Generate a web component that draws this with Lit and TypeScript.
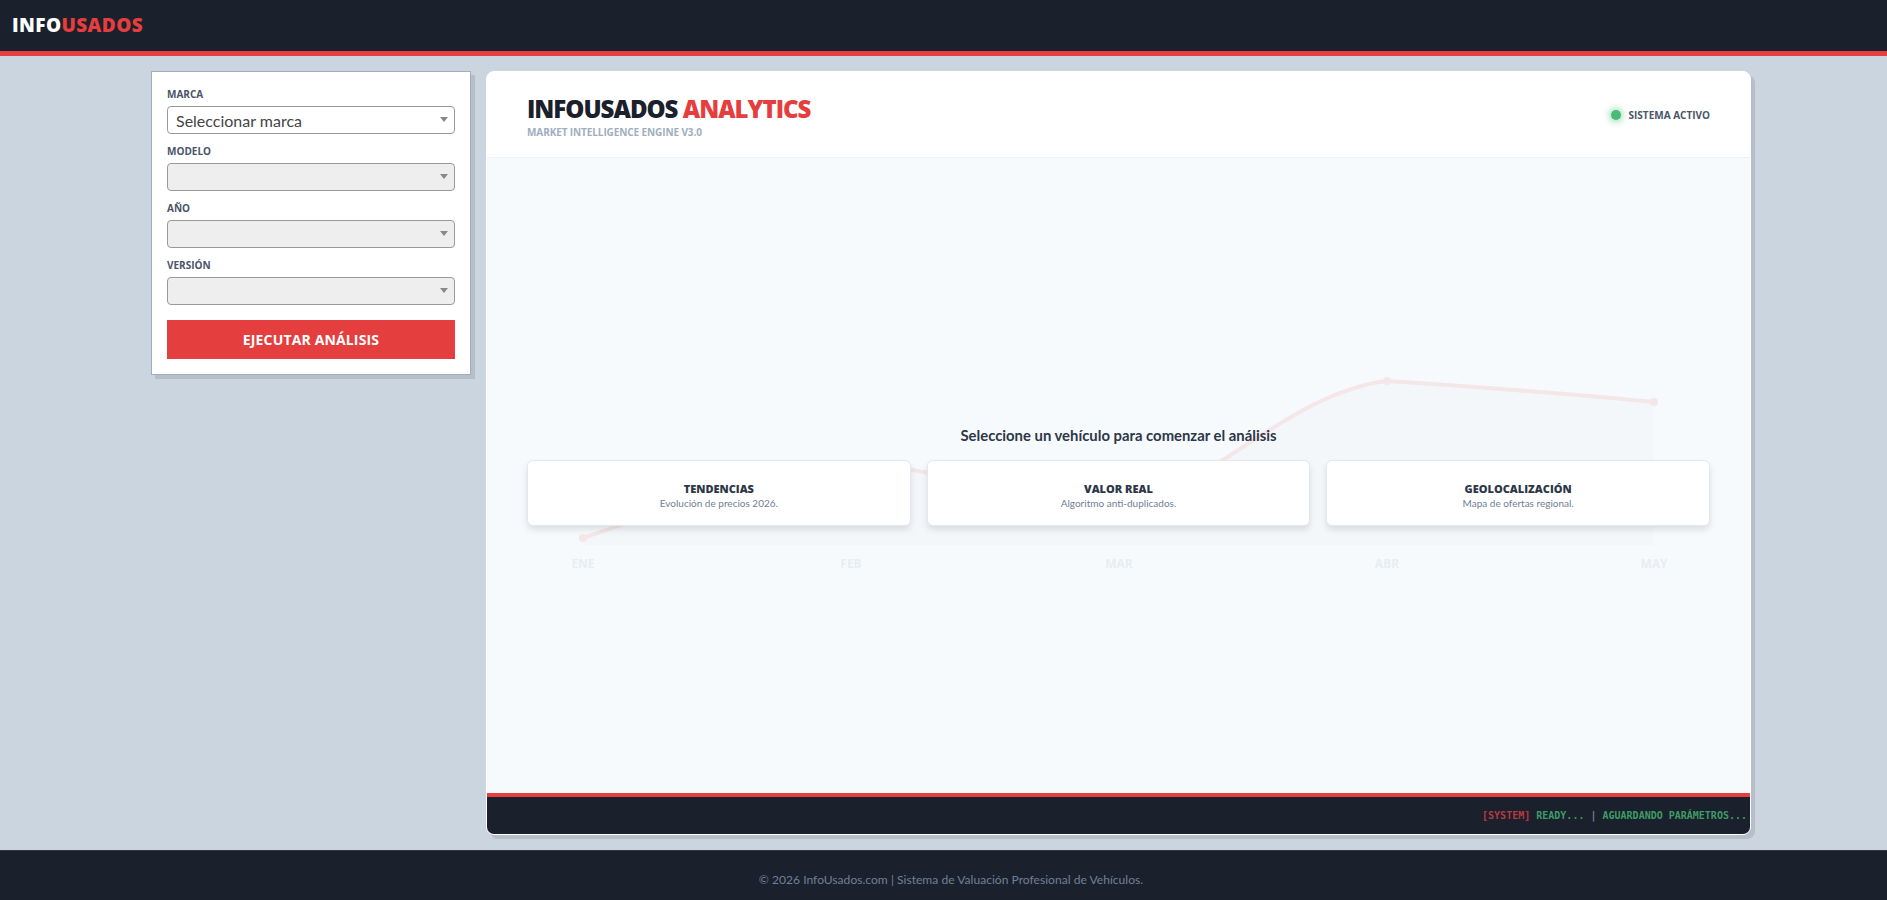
import { LitElement, html, css, svg } from "lit";
import { customElement } from "lit/decorators.js";

const FIELDS = [
  { label: "MARCA", placeholder: "Seleccionar marca", disabled: false },
  { label: "MODELO", placeholder: "", disabled: true },
  { label: "AÑO", placeholder: "", disabled: true },
  { label: "VERSIÓN", placeholder: "", disabled: true },
];

const CARDS = [
  { title: "TENDENCIAS", text: "Evolución de precios 2026." },
  { title: "VALOR REAL", text: "Algoritmo anti-duplicados." },
  { title: "GEOLOCALIZACIÓN", text: "Mapa de ofertas regional." },
];

const MONTHS = [
  { label: "ENE", x: 96, y: 380 },
  { label: "FEB", x: 364, y: 306 },
  { label: "MAR", x: 632, y: 350 },
  { label: "ABR", x: 900, y: 223 },
  { label: "MAY", x: 1167, y: 244 },
];

@customElement("app-root")
export class AppRoot extends LitElement {
  static styles = css`
    :host {
      display: block;
      font-family: "Open Sans", "Noto Sans", sans-serif;
      color: #1a202c;
    }
    * { box-sizing: border-box; }
    .page {
      min-height: 900px;
      display: flex;
      flex-direction: column;
      background: #cbd5e0;
    }
    .topbar {
      height: 56px;
      flex: none;
      background: #1a202c;
      border-bottom: 5px solid #e53e3e;
      display: flex;
      align-items: center;
      padding: 0 12px 2px;
      font-size: 19px;
      font-weight: 800;
      letter-spacing: 0.4px;
      color: #fff;
    }
    .topbar span, .title span { color: #e53e3e; }
    .body {
      flex: 1;
      display: flex;
      justify-content: center;
      align-items: stretch;
      gap: 15px;
      padding: 15px 0 15px 15px;
    }
    .side {
      width: 320px;
      flex: none;
      align-self: flex-start;
      background: #fff;
      border: 1px solid #a0aec0;
      box-shadow: 4px 4px 0 rgba(0, 0, 0, 0.1);
      padding: 15px;
      display: flex;
      flex-direction: column;
    }
    .field { display: flex; flex-direction: column; margin-bottom: 10px; }
    label {
      font-size: 10px;
      line-height: 14px;
      font-weight: 700;
      color: #4a5568;
      margin-bottom: 5px;
    }
    .pick { position: relative; display: block; }
    .pick::after {
      content: "";
      position: absolute;
      right: 7px;
      top: 11px;
      border-left: 4px solid transparent;
      border-right: 4px solid transparent;
      border-top: 5px solid #888;
    }
    select {
      display: block;
      width: 100%;
      height: 28px;
      appearance: none;
      font-family: "Lato", "Open Sans", sans-serif;
      font-size: 16px;
      color: #444;
      background-color: #fff;
      border: 1px solid #999;
      border-radius: 4px;
      padding: 0 8px;
      opacity: 1;
    }
    select:disabled { background-color: #eee; }
    button {
      margin-top: 5px;
      height: 39px;
      border: none;
      background: #e53e3e;
      color: #fff;
      font-family: inherit;
      font-size: 14px;
      font-weight: 700;
      letter-spacing: 0.15px;
    }
    .main {
      width: 1265px;
      flex: none;
      display: flex;
      flex-direction: column;
      background: #f7fafc;
      border: 1px solid #fff;
      border-radius: 8px;
      box-shadow: 4px 4px 0 rgba(0, 0, 0, 0.1);
      overflow: hidden;
    }
    .head {
      height: 86px;
      flex: none;
      background: #fff;
      border-bottom: 1px solid #edf2f7;
      padding: 0 40px;
      display: flex;
      justify-content: space-between;
      align-items: center;
    }
    .brand { padding-top: 4px; }
    .title {
      font-size: 24px;
      line-height: 28px;
      font-weight: 800;
      letter-spacing: -1px;
      color: #1a202c;
    }
    .sub {
      margin-top: 2px;
      font-size: 10px;
      line-height: 14px;
      font-weight: 700;
      letter-spacing: -0.1px;
      color: #a0aec0;
    }
    .status {
      display: flex;
      align-items: center;
      gap: 8px;
      font-size: 10px;
      font-weight: 700;
      color: #4a5568;
    }
    .dot {
      width: 10px;
      height: 10px;
      border-radius: 50%;
      background: #48bb78;
      box-shadow: 0 0 8px #48bb78;
    }
    .stage {
      flex: 1;
      position: relative;
      display: flex;
      flex-direction: column;
      justify-content: center;
      align-items: stretch;
      padding: 0 40px;
    }
    .chart {
      position: absolute;
      left: 0;
      top: 0;
      width: 1263px;
      height: 636px;
      opacity: 0.1;
    }
    .chart text {
      font-family: "Open Sans", sans-serif;
      font-size: 12px;
      font-weight: 700;
      fill: #718096;
      text-anchor: middle;
    }
    .prompt {
      position: relative;
      text-align: center;
      font-family: "Lato", "Open Sans", sans-serif;
      font-size: 14.85px;
      line-height: 20px;
      font-weight: 700;
      color: #2d3748;
      margin-bottom: 15px;
    }
    .cards {
      position: relative;
      display: grid;
      grid-template-columns: repeat(3, 1fr);
      gap: 16px;
    }
    .card {
      height: 66px;
      padding-top: 5px;
      background: #fff;
      border: 1px solid #e2e8f0;
      border-radius: 6px;
      box-shadow: 0 4px 6px rgba(0, 0, 0, 0.1);
      text-align: center;
      display: flex;
      flex-direction: column;
      justify-content: center;
    }
    .card b {
      font-size: 11px;
      line-height: 15px;
      font-weight: 800;
      color: #2d3748;
    }
    .card small {
      font-family: "Lato", "Open Sans", sans-serif;
      font-size: 10px;
      line-height: 14px;
      color: #718096;
    }
    .term {
      height: 41px;
      flex: none;
      background: #1a202c;
      border-top: 4px solid #e53e3e;
      display: flex;
      justify-content: flex-end;
      align-items: center;
      padding-right: 3px;
      font-family: "DejaVu Sans Mono", monospace;
      font-size: 10px;
      font-weight: 700;
      color: #3f9b66;
      white-space: pre;
    }
    .term i { font-style: normal; color: #b83a40; }
    .term u { text-decoration: none; color: #718096; }
    .foot {
      height: 50px;
      flex: none;
      background: #1a202c;
      border-top: 1px solid #2d3748;
      padding: 8px 0 0 15px;
      display: flex;
      justify-content: center;
      align-items: center;
      font-family: "Lato", "Open Sans", sans-serif;
      font-size: 12.1px;
      color: #718096;
    }
  `;

  private chart() {
    const line =
      "M96 380 C 170 355, 290 312, 364 306 C 420 303, 560 345, 632 350 C 720 335, 800 235, 900 223 C 990 229, 1080 235, 1167 244";
    return svg`
      <svg class="chart" viewBox="0 0 1263 636">
        <path d="${line} L1167 387 L96 387 Z" fill="#a0aec0" opacity="0.25"></path>
        <path d=${line} fill="none" stroke="#e53e3e" stroke-width="4"></path>
        ${MONTHS.map(
          (m) => svg`
            <circle cx=${m.x} cy=${m.y} r="4" fill="#e53e3e"></circle>
            <text x=${m.x} y="410">${m.label}</text>`
        )}
      </svg>`;
  }

  render() {
    return html`
      <div class="page">
        <div class="topbar">INFO<span>USADOS</span></div>
        <div class="body">
          <aside class="side">
            ${FIELDS.map(
              (f) => html`
                <div class="field">
                  <label>${f.label}</label>
                  <div class="pick">
                    <select ?disabled=${f.disabled}>
                      <option>${f.placeholder}</option>
                    </select>
                  </div>
                </div>
              `
            )}
            <button>EJECUTAR ANÁLISIS</button>
          </aside>
          <section class="main">
            <div class="head">
              <div class="brand">
                <div class="title">INFOUSADOS <span>ANALYTICS</span></div>
                <div class="sub">MARKET INTELLIGENCE ENGINE V3.0</div>
              </div>
              <div class="status"><div class="dot"></div>SISTEMA ACTIVO</div>
            </div>
            <div class="stage">
              ${this.chart()}
              <div class="prompt">Seleccione un vehículo para comenzar el análisis</div>
              <div class="cards">
                ${CARDS.map(
                  (c) => html`
                    <div class="card"><b>${c.title}</b><small>${c.text}</small></div>
                  `
                )}
              </div>
            </div>
            <div class="term"><i>[SYSTEM]</i> READY... <u>|</u> AGUARDANDO PARÁMETROS...</div>
          </section>
        </div>
        <footer class="foot">© 2026 InfoUsados.com | Sistema de Valuación Profesional de Vehículos.</footer>
      </div>
    `;
  }
}
